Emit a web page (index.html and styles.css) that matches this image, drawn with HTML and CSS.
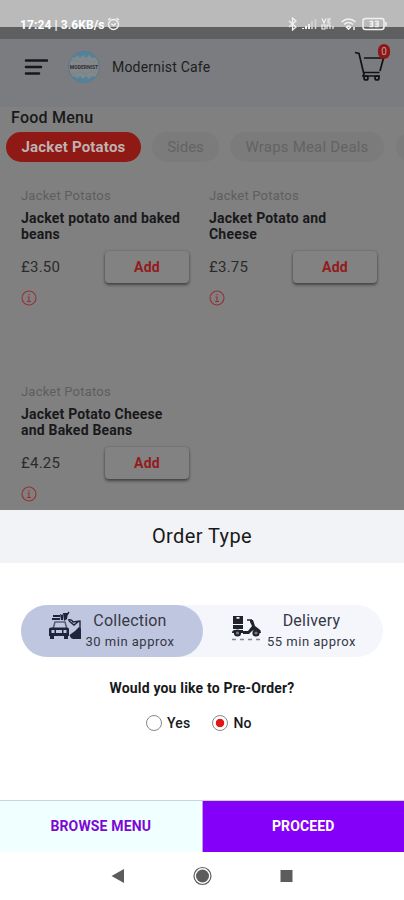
FILE: index.html
```
<!DOCTYPE html>
<html lang="en">
<head>
<meta charset="utf-8">
<meta name="viewport" content="width=device-width">
<title>Modernist Cafe</title>
<link rel="stylesheet" href="styles.css">
</head>
<body>
<div class="status">
  <span class="clock">17:24 | 3.6KB/s</span>
  <svg class="alarm" width="13" height="14" viewBox="0 0 13 14" fill="none" stroke="#f4f4f4" stroke-width="1.3"><circle cx="6.5" cy="7.5" r="5"/><path d="M1 3 3.5 1M12 3 9.5 1M4.2 6.7 6.5 8.5 9 6.2"/></svg>
  <svg class="signals" width="100" height="14" viewBox="0 0 100 14" fill="none" stroke="#f1f1f1">
    <path d="M1 4 8 10 4.5 13V1L8 4 1 10" stroke-width="1.3"/>
    <path d="M15 12v-1M18 12V9M21 12V7" stroke-width="2"/><path d="M24 12V4M27.500 12V2" stroke="#d5d5d5" stroke-width="1.6"/>
    <path d="M34 1.500 36 6 38 1.500M43 2h-3v4h3M40 4h2M34 8v4h3V8ZM39 12V8h3v4M45 9v3" stroke-width="1.2"/>
    <path d="M53.500 5Q60.500-1 67.500 5M56 7.500q4.500-4 9 0M58.500 10q2-2 4 0l-2 2Z" stroke-width="1.6"/><path d="M66 10v3" stroke-width="1.5"/>
    <rect x="75" y="1.500" width="21" height="11" rx="2.500" stroke-width="1.500"/><path d="M98 5v4" stroke-width="1.500"/>
    <path d="M81.500 4.500h3v5h-3M82 7h2.500M87 4.500h3v5h-3M87.500 7H90" stroke-width="1.500"/>
  </svg>
</div>
<div class="strip"></div>
<header class="topbar">
  <svg class="burger" width="24" height="18" viewBox="0 0 24 18" stroke="#15171d" stroke-width="2.600" stroke-linecap="round"><path d="M2 2.500h21M2 9h15M2 15.500h13"/></svg>
  <div class="logo">
    <svg width="34" height="34" viewBox="0 0 34 34">
      <circle cx="17" cy="17" r="15.500" fill="#858789" stroke="#55788a" stroke-width="1"/>
      <path d="M5.500 7Q17-4 28.500 7L25 8 22 5 19 8 16 5 13 8 10 5 8 8ZM5.500 27Q17 38 28.500 27L25 26 22 29 19 26 16 29 13 26 10 29 8 26Z" fill="#50839d"/>
      <path d="M4 11q3-3 6 0t6 0 6 0 7 0M4 23q3 3 6 0t6 0 6 0 7 0" fill="none" stroke="#688b9c"/>
    </svg>
    <span>MODERNIST</span>
  </div>
  <h1>Modernist Cafe</h1>
  <div class="cart">
    <svg width="32" height="32" viewBox="0 0 32 32" fill="none" stroke="#111214" stroke-width="1.700"><path d="M1 2.500 5 3.500 9.500 22.500H25.500M10 8H29.500L26 21M10.500 22.500 9 26H26"/><circle cx="12" cy="28" r="2"/><circle cx="23" cy="28" r="2"/></svg>
    <span class="badge">0</span>
  </div>
</header>
<main class="menu">
  <h2>Food Menu</h2>
  <nav class="tabs">
    <span class="tab active">Jacket Potatos</span>
    <span class="tab sides">Sides</span>
    <span class="tab wraps">Wraps Meal Deals</span>
    <span class="tab next"></span>
  </nav>
  <section class="items">
    <article>
      <p class="cat">Jacket Potatos</p>
      <h3>Jacket potato and baked<br>beans</h3>
      <div class="buy"><span class="price">£3.50</span><span class="add">Add</span></div>
      <svg class="info" width="16" height="16" viewBox="0 0 16 16"><circle cx="8" cy="8" r="7"/><path d="M8 4v1.200M6.500 7H8v4.500M6 11.500h4"/></svg>
    </article>
    <article>
      <p class="cat">Jacket Potatos</p>
      <h3>Jacket Potato and<br>Cheese</h3>
      <div class="buy"><span class="price">£3.75</span><span class="add">Add</span></div>
      <svg class="info" width="16" height="16" viewBox="0 0 16 16"><circle cx="8" cy="8" r="7"/><path d="M8 4v1.200M6.500 7H8v4.500M6 11.500h4"/></svg>
    </article>
    <article>
      <p class="cat">Jacket Potatos</p>
      <h3>Jacket Potato Cheese<br>and Baked Beans</h3>
      <div class="buy"><span class="price">£4.25</span><span class="add">Add</span></div>
      <svg class="info" width="16" height="16" viewBox="0 0 16 16"><circle cx="8" cy="8" r="7"/><path d="M8 4v1.200M6.500 7H8v4.500M6 11.500h4"/></svg>
    </article>
  </section>
</main>
<section class="sheet">
  <h2 class="title">Order Type</h2>
  <div class="switch">
    <div class="option chosen">
      <svg width="34" height="32" viewBox="0 0 34 32" fill="#20243a">
        <path d="M5 4h7v2H5zM4 7h8v2H4zM12 3l2 1 1-1v6h-2zM15 2h5l-1 6-3 2z"/>
        <path d="M19 4 21 1M20 9q4-1 5 2l7-1v8M21 10l5 4 5-4" fill="none" stroke="#20243a" stroke-width="1.400"/>
        <path d="M5 18 7 11H17l2 7M7 11h10" fill="none" stroke="#5b627d" stroke-width="1.700"/>
        <path fill-rule="evenodd" d="M1 18q0-1.500 2-1.500h16q2 0 2 1.500v7h-1v3h-4v-3H6v3H2v-3H1zM3.500 19v3h3v-3zM8 19v3h6v-3zM15.500 19v3h3v-3z"/>
        <path d="M21.500 24 27 20l4-4 2 2v10H25q-3-1-3.500-4z"/>
      </svg>
      <div class="label"><b>Collection</b><span>30 min approx</span></div>
    </div>
    <div class="option other">
      <svg width="32" height="32" viewBox="0 0 32 32" fill="#20232b">
        <path fill-rule="evenodd" d="M3 5h10v8H3zM6.500 6v1.800h3V6zM3 14h10v4H3zM2 22q0-3 3-3h8v3H2z"/>
        <path d="M13 20h5l4-5-2-4V9h3l2 6 4 3q2 1 2 4h-4q-2-4-5-2l-3 3h-6z"/>
        <path d="M17 9h5" fill="none" stroke="#20232b" stroke-width="1.500"/>
        <circle cx="7.500" cy="22" r="2.600" fill="#777b83" stroke="#20232b" stroke-width="2"/><circle cx="26" cy="22" r="2.600" fill="#777b83" stroke="#20232b" stroke-width="2"/>
        <path d="M2 28.500h28" stroke="#85888f" stroke-width="1.300" stroke-dasharray="4 4"/>
      </svg>
      <div class="label"><b>Delivery</b><span>55 min approx</span></div>
    </div>
  </div>
  <p class="question">Would you like to Pre-Order?</p>
  <div class="radios">
    <span class="radio"><i></i>Yes</span>
    <span class="radio on"><i></i>No</span>
  </div>
  <div class="actions">
    <span class="browse">BROWSE MENU</span>
    <span class="proceed">PROCEED</span>
  </div>
</section>
<footer class="nav">
  <svg width="404" height="48" viewBox="0 0 404 48" fill="#5c5c5c"><path d="M111.500 24 124 17v14z"/><circle cx="202.500" cy="24" r="6.500"/><circle cx="202.500" cy="24" r="8.500" fill="none" stroke="#5c5c5c" stroke-width="1.200"/><path d="M280.500 18h12v12h-12z"/></svg>
</footer>
</body>
</html>
```
FILE: styles.css
```
* { box-sizing: border-box; }
body, h1, h2, h3, p { margin: 0; }
body {
  width: 404px;
  height: 900px;
  overflow: hidden;
  display: flex;
  flex-direction: column;
  background: #fff;
  font-family: Roboto, sans-serif;
  color: #18191b;
}
svg { display: block; flex: none; }
.status {
  height: 27px;
  flex: none;
  background: #bababa;
  display: flex;
  align-items: flex-start;
  padding: 17px 0 0 20px;
  position: relative;
  z-index: 1;
}
.clock { font-size: 12px; line-height: 16px; font-weight: 700; color: #fff; width: 87px; white-space: nowrap; letter-spacing: 0.1px; }
.signals { margin: 0 0 0 168px; }
.strip { height: 12px; flex: none; background: #5e5f61; }
.topbar {
  height: 68px;
  flex: none;
  background: #7b7c7f;
  display: flex;
  align-items: flex-start;
  padding: 10px 13px 0 24px;
}
.burger { margin-top: 9px; }
.logo { margin: 1px 11px 0 19px; display: grid; place-items: center; }
.logo > * { grid-area: 1 / 1; }
.logo span { font-size: 5px; line-height: 8px; font-weight: 700; color: #2b3035; }
h1 { font-size: 14px; font-weight: 400; line-height: 20px; margin-top: 8px; letter-spacing: 0.2px; flex: 1; color: #1d1e20; }
.cart { position: relative; width: 37px; padding-top: 1px; }
.badge {
  position: absolute;
  left: 24px;
  top: -5px;
  width: 12px;
  height: 15px;
  border-radius: 6px;
  background: #8f1714;
  color: #b5a2a2;
  font-size: 10px;
  line-height: 15px;
  text-align: center;
}
.menu { height: 403px; flex: none; background: #808080; overflow: hidden; }
.menu h2 { font-size: 16px; line-height: 20px; font-weight: 500; padding: 1px 0 0 11px; letter-spacing: 0.25px; }
.tabs { display: flex; margin: 4px 0 0 6px; width: 398px; overflow: hidden; }
.tab {
  height: 30px;
  flex: none;
  border-radius: 15px;
  background: #7b7b7b;
  color: #636363;
  font-size: 15px;
  line-height: 30px;
  text-align: center;
  white-space: nowrap;
}
.active { width: 135px; background: #8e1915; color: #bfb2b1; font-weight: 700; letter-spacing: 0.2px; }
.sides { width: 67px; margin-left: 11px; }
.wraps { width: 154px; margin-left: 11px; letter-spacing: 0.2px; }
.next { width: 60px; margin-left: 12px; }
.items { display: grid; grid-template-columns: 188px 188px; grid-auto-rows: 196px; padding: 26px 0 0 21px; }
.cat { font-size: 13px; line-height: 16px; color: #5e5e5e; letter-spacing: 0.2px; }
h3 { font-size: 14px; line-height: 16px; font-weight: 700; margin-top: 6px; white-space: nowrap; letter-spacing: 0.2px; }
.buy { display: flex; align-items: center; justify-content: space-between; width: 168px; margin-top: 9px; }
.price { font-size: 15px; color: #2b2b2b; letter-spacing: 0.25px; }
.add {
  width: 84px;
  height: 32px;
  border-radius: 4px;
  background: #828282;
  box-shadow: 0 2px 3px #444, 0 0 2px #606060;
  color: #941b1b;
  font-size: 14px;
  line-height: 32px;
  font-weight: 700;
  text-align: center;
  letter-spacing: 0.2px;
}
.info { margin-top: 7px; fill: none; stroke: #953034; stroke-width: 1.1; }
.sheet { height: 342px; flex: none; background: #fff; display: flex; flex-direction: column; align-items: center; }
.title {
  width: 100%;
  height: 53px;
  background: #f2f3f6;
  font-size: 20px;
  font-weight: 400;
  line-height: 53px;
  text-align: center;
  letter-spacing: 0.4px;
}
.switch { display: flex; width: 362px; height: 52px; margin-top: 42px; border-radius: 26px; background: #f4f6fc; }
.option { display: flex; padding-top: 6px; width: 181px; }
.chosen { width: 182px; border-radius: 26px; background: #bfc6df; padding-left: 27px; }
.other { padding-left: 27px; }
.label { display: flex; flex-direction: column; align-items: center; width: 96px; color: #353945; white-space: nowrap; }
.other .label { margin-left: 2px; }
.label b { font-size: 16px; font-weight: 400; line-height: 20px; letter-spacing: 0.2px; }
.label span { font-size: 13px; line-height: 18px; margin-top: 2px; letter-spacing: 0.5px; }
.question { font-size: 14px; line-height: 18px; font-weight: 700; margin-top: 22px; letter-spacing: 0.18px; }
.radios { display: flex; gap: 22px; width: 112px; margin-top: 17px; align-self: flex-start; margin-left: 146px; }
.radio { display: flex; align-items: center; gap: 5px; font-size: 14px; line-height: 18px; font-weight: 500; letter-spacing: 0.2px; }
.radio i { width: 16px; height: 16px; flex: none; border: 1px solid #888; border-radius: 50%; }
.on i { background: radial-gradient(circle, #e31616 0 3.8px, #fff 4.6px); }
.actions { display: flex; width: 100%; margin-top: auto; height: 52px; border-top: 1px solid #cdd5dc; }
.actions span { flex: 1; font-size: 14px; line-height: 51px; font-weight: 700; text-align: center; letter-spacing: 0.15px; }
.browse { background: #f0ffff; color: #7d08d5; border-right: 1px solid #c897fb; }
.proceed { background: #8500f8; color: #fff; }
.nav { height: 48px; flex: none; }
```
